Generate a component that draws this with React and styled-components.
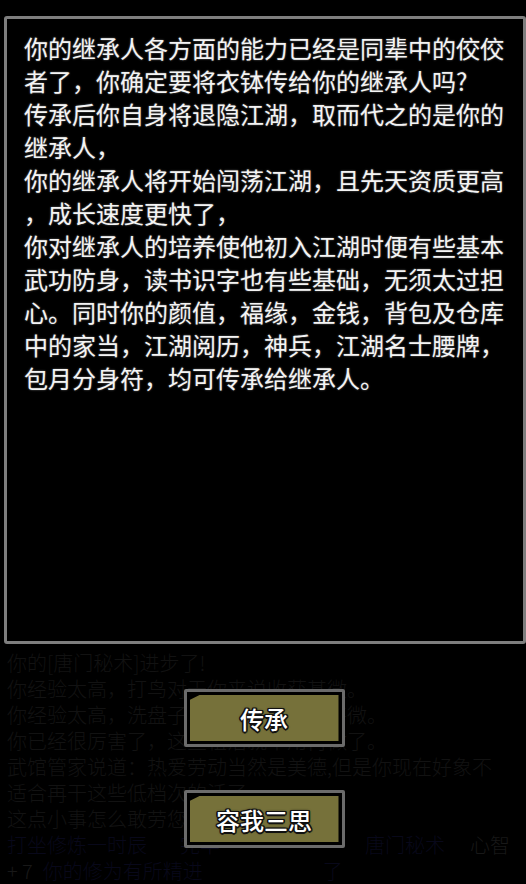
import React from "react";
import styled, { createGlobalStyle } from "styled-components";

const Global = createGlobalStyle`
  html, body {
    margin: 0;
    padding: 0;
    background: #000;
  }
  body {
    font-family: "Noto Sans CJK SC", "Noto Sans", sans-serif;
  }
`;

const Screen = styled.div`
  width: 526px;
  height: 884px;
  overflow: hidden;
  background: #000;
  display: flex;
  flex-direction: column;
  padding-top: 16px;
  box-sizing: border-box;
`;

const Dialog = styled.section`
  margin-left: 4px;
  width: 522px;
  height: 629px;
  box-sizing: border-box;
  border: 3px solid #7e7e7e;
  border-radius: 3px;
  background: #000;
  padding: 12px 0 0 17px;
`;

const Line = styled.div`
  font-size: 24px;
  line-height: 33px;
  color: #f4f4f4;
  white-space: nowrap;
  text-shadow: 0 0 2px rgba(255, 255, 255, 0.45);
`;

const Log = styled.div`
  position: relative;
  flex: 1;
  padding: 6px 0 0 7px;
`;

const LogLine = styled.div`
  display: flex;
  font-size: 20px;
  font-weight: 300;
  line-height: 26px;
  color: #121212;
  white-space: nowrap;
`;

const Piece = styled.span`
  color: ${(p) => (p.$tone === "blue" ? "#08081a" : p.$tone === "soft" ? "#181818" : "inherit")};
  margin-left: ${(p) => p.$gap || 0}px;
`;

const Choices = styled.div`
  position: absolute;
  top: 45px;
  left: 0;
  right: 0;
  display: flex;
  flex-direction: column;
  align-items: center;
  gap: 43px;
  padding-left: 2px;
`;

const Frame = styled.button`
  width: 161px;
  height: 58px;
  box-sizing: border-box;
  border: 3px solid #6b6b6b;
  border-radius: 2px;
  background: #000;
  padding: 3px;
  display: flex;
  cursor: pointer;
`;

const Face = styled.span`
  flex: 1;
  display: flex;
  align-items: center;
  justify-content: center;
  background: #76713a;
  clip-path: polygon(0 5px, 10px 0, 100% 0, 100% 100%, 0 100%);
  font-family: "Noto Sans CJK SC", "Noto Sans", sans-serif;
  font-size: 24px;
  font-weight: 500;
  color: #ffffff;
  text-shadow:
    1.5px 0 0 #111, -1.5px 0 0 #111, 0 1.5px 0 #111, 0 -1.5px 0 #111,
    1.2px 1.2px 0 #111, -1.2px 1.2px 0 #111, 1.2px -1.2px 0 #111, -1.2px -1.2px 0 #111,
    0 0 3px #000;
`;

const story = [
  "你的继承人各方面的能力已经是同辈中的佼佼",
  "者了，你确定要将衣钵传给你的继承人吗?",
  "传承后你自身将退隐江湖，取而代之的是你的",
  "继承人，",
  "你的继承人将开始闯荡江湖，且先天资质更高",
  "，成长速度更快了，",
  "你对继承人的培养使他初入江湖时便有些基本",
  "武功防身，读书识字也有些基础，无须太过担",
  "心。同时你的颜值，福缘，金钱，背包及仓库",
  "中的家当，江湖阅历，神兵，江湖名士腰牌，",
  "包月分身符，均可传承给继承人。",
];

const history = [
  [{ t: "你的[唐门秘术]进步了!" }],
  [{ t: "你经验太高，打鸟对于你来说收获甚微。" }],
  [{ t: "你经验太高，洗盘子对于你来说收获甚微。" }],
  [{ t: "你已经很厉害了，这些粗活就不用再做了。" }],
  [{ t: "武馆管家说道：热爱劳动当然是美德,但是你现在好象不" }],
  [{ t: "适合再干这些低档次的活了。" }],
  [{ t: "这点小事怎么敢劳您大驾。" }],
  [
    { t: "打坐修炼一时辰", tone: "blue" },
    { t: "完毕", tone: "blue", gap: 33 },
    { t: "唐门秘术", tone: "blue", gap: 145 },
    { t: "心智", tone: "soft", gap: 25 },
  ],
  [
    { t: "+ 7", tone: "soft" },
    { t: "你的修为有所精进", tone: "blue", gap: 10 },
    { t: "了", tone: "blue", gap: 120 },
  ],
];

export default function App() {
  return (
    <>
      <Global />
      <Screen>
        <Dialog>
          {story.map((s, i) => (
            <Line key={i}>{s}</Line>
          ))}
        </Dialog>
        <Log>
          {history.map((row, i) => (
            <LogLine key={i}>
              {row.map((p, j) => (
                <Piece key={j} $tone={p.tone} $gap={p.gap}>
                  {p.t}
                </Piece>
              ))}
            </LogLine>
          ))}
          <Choices>
            <Frame type="button">
              <Face>传承</Face>
            </Frame>
            <Frame type="button">
              <Face>容我三思</Face>
            </Frame>
          </Choices>
        </Log>
      </Screen>
    </>
  );
}
